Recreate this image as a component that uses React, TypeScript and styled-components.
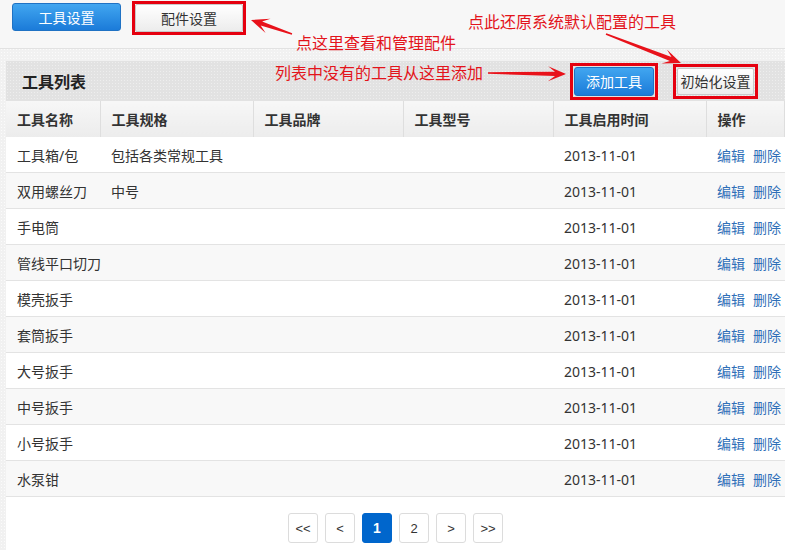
import styled, { createGlobalStyle } from "styled-components";

const GlobalStyle = createGlobalStyle`
  html, body {
    margin: 0;
    padding: 0;
    background: #fff;
  }
  body {
    font-family: "Noto Sans", "Noto Sans CJK SC", sans-serif;
    font-size: 14px;
    color: #333;
  }
`;

// ─── Shell ────────────────────────────────────────────────────
const Page = styled.div`
  position: relative;
  width: 785px;
  height: 550px;
  overflow: hidden;
  display: flex;
  flex-direction: column;
  background-color: #f1f1f1;
  background-image: radial-gradient(circle, #fbfbfb 35%, transparent 45%);
  background-size: 3px 3px;
`;

const TopBar = styled.div`
  height: 49px;
  flex-shrink: 0;
  display: flex;
  align-items: flex-start;
  gap: 11px;
  padding: 1px 0 0 12px;
  box-sizing: border-box;
  background: #f7f7f7;
  border-bottom: 1px solid #e2e2e2;
`;

const BlueButton = styled.button<{ $w: number; $h: number }>`
  width: ${({ $w }) => $w}px;
  height: ${({ $h }) => $h}px;
  margin-top: ${({ $h }) => ($h === 28 ? 2 : 0)}px;
  padding: 0;
  border: 1px solid #1f72c4;
  border-radius: 3px;
  background: linear-gradient(#41a6f0, #1b7bd9);
  color: #fff;
  font: 14px "Noto Sans", "Noto Sans CJK SC", sans-serif;
  cursor: pointer;
`;

const GreyButton = styled.button<{ $w: number; $h: number }>`
  width: ${({ $w }) => $w}px;
  height: ${({ $h }) => $h}px;
  padding: 0;
  border: 1px solid #c9c9c9;
  border-radius: 2px;
  background: linear-gradient(#ffffff, #ececec);
  color: #333;
  font: 14px "Noto Sans", "Noto Sans CJK SC", sans-serif;
  cursor: pointer;
`;

const RedFrame = styled.div<{ $pad?: number }>`
  display: flex;
  padding: ${({ $pad }) => $pad ?? 0}px;
  border: 3px solid #e5000f;
`;

// ─── Panel ────────────────────────────────────────────────────
const Main = styled.div`
  flex: 1;
  padding: 12px 0 0 6px;
  display: flex;
`;

const Panel = styled.div`
  flex: 1;
  display: flex;
  flex-direction: column;
  background: #fff;
`;

const PanelHeader = styled.div`
  height: 40px;
  display: flex;
  align-items: center;
  gap: 15px;
  padding: 0 27px 0 16px;
  background-color: #e2e2e2;
  background-image: radial-gradient(circle, #eeeeee 35%, transparent 45%);
  background-size: 3px 3px;
`;

const Title = styled.h2`
  margin: 0 auto 0 0;
  font-size: 16px;
  font-weight: bold;
  color: #222;
`;

const Table = styled.table`
  width: 779px;
  table-layout: fixed;
  border-collapse: collapse;
`;

const Th = styled.th<{ $w?: number }>`
  width: ${({ $w }) => ($w ? `${$w}px` : "auto")};
  height: 36px;
  padding: 0 0 0 11px;
  text-align: left;
  font-size: 14px;
  font-weight: bold;
  color: #333;
  background: linear-gradient(#f7f7f7, #ececec);
  border-right: 1px solid #dedede;
  box-sizing: border-box;
`;

const Tr = styled.tr<{ $alt: boolean }>`
  background: ${({ $alt }) => ($alt ? "#f8f8f8" : "#fff")};
  border-bottom: 1px solid #e3e3e3;
`;

const Td = styled.td`
  height: 34px;
  padding: 1px 0 0 11px;
  font-size: 14px;
  color: #333;
  white-space: nowrap;
`;

const ActionLink = styled.a`
  color: #2f6fb8;
  text-decoration: none;
  margin-right: 8px;
  cursor: pointer;
`;

const Pager = styled.div`
  display: flex;
  justify-content: center;
  gap: 7px;
  padding-top: 16px;
`;

const PageBtn = styled.button<{ $active?: boolean }>`
  width: 30px;
  height: 30px;
  padding: 0;
  border: 1px solid ${({ $active }) => ($active ? "#0066cc" : "#dcdcdc")};
  border-radius: 3px;
  background: ${({ $active }) => ($active ? "#0066cc" : "#fff")};
  color: ${({ $active }) => ($active ? "#fff" : "#333")};
  font: ${({ $active }) => ($active ? "bold 14px" : "13px")} "Liberation Sans", sans-serif;
  cursor: pointer;
`;

// ─── Annotations ──────────────────────────────────────────────
const Note = styled.span<{ $x: number; $y: number }>`
  position: absolute;
  left: ${({ $x }) => $x}px;
  top: ${({ $y }) => $y}px;
  font: 16px "Noto Sans CJK SC", sans-serif;
  line-height: 20px;
  color: #e3141b;
  white-space: nowrap;
`;

const Overlay = styled.svg`
  position: absolute;
  left: 0;
  top: 0;
  pointer-events: none;
`;

function arrowPoints(x1: number, y1: number, x2: number, y2: number) {
  const dx = x2 - x1;
  const dy = y2 - y1;
  const len = Math.hypot(dx, dy);
  const ux = dx / len;
  const uy = dy / len;
  const nx = -uy;
  const ny = ux;
  const at = (d: number, w: number) =>
    `${(x2 - ux * d + nx * w).toFixed(1)},${(y2 - uy * d + ny * w).toFixed(1)}`;
  return [
    at(len, 0.7),
    at(11, 2.2),
    at(18, 7.5),
    at(0, 0),
    at(18, -7.5),
    at(11, -2.2),
    at(len, -0.7),
  ].join(" ");
}

const ARROWS = [
  [292, 34, 251, 20],
  [488, 73, 566, 74],
  [606, 34, 681, 63],
];

const HEADERS: [string, number?][] = [
  ["工具名称", 94],
  ["工具规格", 153],
  ["工具品牌", 150],
  ["工具型号", 150],
  ["工具启用时间", 153],
  ["操作"],
];

const TOOLS: [string, string][] = [
  ["工具箱/包", "包括各类常规工具"],
  ["双用螺丝刀", "中号"],
  ["手电筒", ""],
  ["管线平口切刀", ""],
  ["模壳扳手", ""],
  ["套筒扳手", ""],
  ["大号扳手", ""],
  ["中号扳手", ""],
  ["小号扳手", ""],
  ["水泵钳", ""],
];

export default function App() {
  return (
    <>
      <GlobalStyle />
      <Page>
        <TopBar>
          <BlueButton $w={109} $h={28}>工具设置</BlueButton>
          <RedFrame>
            <GreyButton $w={108} $h={28}>配件设置</GreyButton>
          </RedFrame>
        </TopBar>

        <Main>
          <Panel>
            <PanelHeader>
              <Title>工具列表</Title>
              <RedFrame $pad={1}>
                <BlueButton $w={80} $h={29}>添加工具</BlueButton>
              </RedFrame>
              <RedFrame $pad={1}>
                <GreyButton $w={77} $h={27}>初始化设置</GreyButton>
              </RedFrame>
            </PanelHeader>

            <Table>
              <thead>
                <tr>
                  {HEADERS.map(([h, w]) => (
                    <Th key={h} $w={w}>{h}</Th>
                  ))}
                </tr>
              </thead>
              <tbody>
                {TOOLS.map(([name, spec], i) => (
                  <Tr key={name} $alt={i % 2 === 1}>
                    <Td>{name}</Td>
                    <Td>{spec}</Td>
                    <Td />
                    <Td />
                    <Td>2013-11-01</Td>
                    <Td>
                      <ActionLink>编辑</ActionLink>
                      <ActionLink>删除</ActionLink>
                    </Td>
                  </Tr>
                ))}
              </tbody>
            </Table>

            <Pager>
              <PageBtn>&lt;&lt;</PageBtn>
              <PageBtn>&lt;</PageBtn>
              <PageBtn $active>1</PageBtn>
              <PageBtn>2</PageBtn>
              <PageBtn>&gt;</PageBtn>
              <PageBtn>&gt;&gt;</PageBtn>
            </Pager>
          </Panel>
        </Main>

        <Note $x={296} $y={32}>点这里查看和管理配件</Note>
        <Note $x={468} $y={11}>点此还原系统默认配置的工具</Note>
        <Note $x={275} $y={62}>列表中没有的工具从这里添加</Note>

        <Overlay width={785} height={550}>
          {ARROWS.map(([x1, y1, x2, y2], i) => (
            <polygon key={i} points={arrowPoints(x1, y1, x2, y2)} fill="#e8121a" />
          ))}
        </Overlay>
      </Page>
    </>
  );
}
